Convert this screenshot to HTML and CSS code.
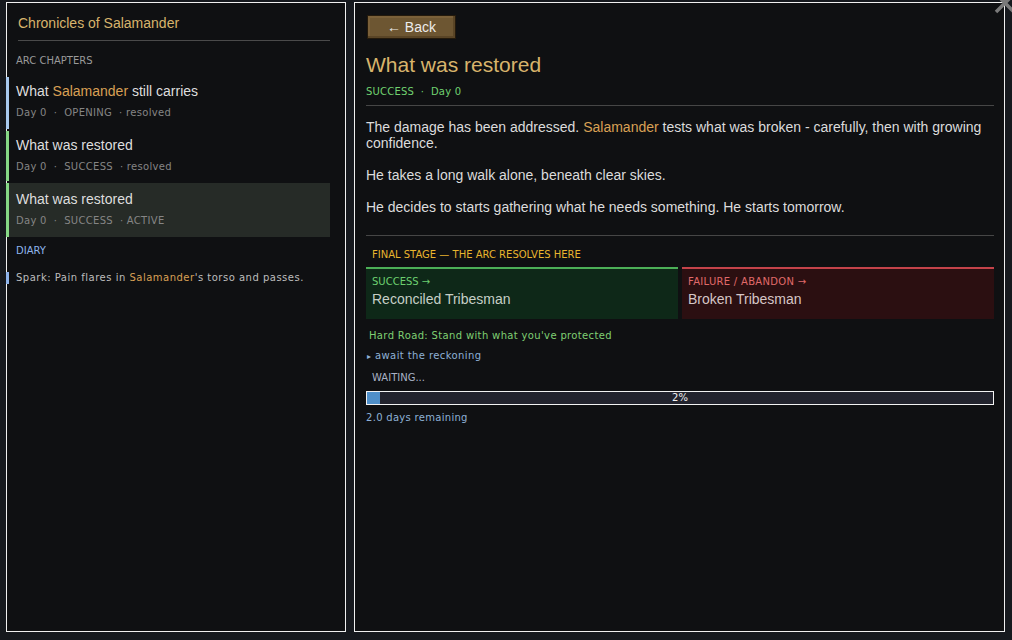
FILE: index.html
```html
<!DOCTYPE html>
<html>
<head>
<meta charset="utf-8">
<link rel="stylesheet" href="styles.css">
</head>
<body>
<div class="app">
  <aside class="side">
    <h1 class="side-title">Chronicles of Salamander</h1>
    <div class="section-label">ARC CHAPTERS</div>
    <div class="chapter ch-open">
      <div class="ch-title">What <span class="name">Salamander</span> still carries</div>
      <div class="ch-meta">Day 0 &nbsp;·&nbsp; OPENING &nbsp;· resolved</div>
    </div>
    <div class="chapter ch-success">
      <div class="ch-title">What was restored</div>
      <div class="ch-meta">Day 0 &nbsp;·&nbsp; SUCCESS &nbsp;· resolved</div>
    </div>
    <div class="chapter ch-success ch-active">
      <div class="ch-title">What was restored</div>
      <div class="ch-meta">Day 0 &nbsp;·&nbsp; SUCCESS &nbsp;· ACTIVE</div>
    </div>
    <div class="section-label diary-label">DIARY</div>
    <div class="diary-entry">Spark: Pain flares in <span class="name">Salamander</span>'s torso and passes.</div>
  </aside>
  <main class="main">
    <button class="back">← Back</button>
    <h2 class="main-title">What was restored</h2>
    <div class="main-meta">SUCCESS &nbsp;·&nbsp; Day 0</div>
    <div class="story">
      <p>The damage has been addressed. <span class="name">Salamander</span> tests what was broken - carefully, then with growing confidence.</p>
      <p>He takes a long walk alone, beneath clear skies.</p>
      <p>He decides to starts gathering what he needs something. He starts tomorrow.</p>
    </div>
    <div class="final">FINAL STAGE — THE ARC RESOLVES HERE</div>
    <div class="outcomes">
      <div class="outcome good">
        <div class="oc-label">SUCCESS →</div>
        <div class="oc-name">Reconciled Tribesman</div>
      </div>
      <div class="outcome bad">
        <div class="oc-label">FAILURE / ABANDON →</div>
        <div class="oc-name">Broken Tribesman</div>
      </div>
    </div>
    <div class="hard-road">Hard Road: Stand with what you've protected</div>
    <div class="await"><span class="tri">▸</span> await the reckoning</div>
    <div class="waiting">WAITING...</div>
    <div class="bar">
      <div class="fill" style="width:2%"></div>
      <div class="pct">2%</div>
    </div>
    <div class="remaining">2.0 days remaining</div>
  </main>
  <svg class="close" width="24" height="24" viewBox="0 0 24 24">
    <path d="M3 3 L21 21 M21 3 L3 21" stroke="#7a7a7a" stroke-width="3.5" fill="none"/>
  </svg>
</div>
</body>
</html>
```
FILE: styles.css
```css
* { box-sizing: border-box; }
html, body { margin: 0; padding: 0; }
body {
  background: #16191e;
  width: 1012px;
  height: 640px;
  overflow: hidden;
  font-family: "Liberation Sans", Arial, sans-serif;
  color: #dcdcdc;
}
.app {
  position: relative;
  display: flex;
  gap: 8px;
  padding: 2px 7px 8px 6px;
  height: 640px;
}
.side {
  width: 340px;
  flex: none;
  background: #0f1012;
  border: 1px solid #f0f0f0;
  padding: 0 15px 0 0;
}
.side-title {
  margin: 0 0 0 11px;
  padding: 11px 0 8px 0;
  font-size: 14px;
  font-weight: normal;
  color: #d8b46c;
  border-bottom: 1px solid #4a4a4a;
  line-height: 18px;
}
.section-label {
  font-family: "DejaVu Sans", sans-serif;
  font-size: 10px;
  color: #9a9a9a;
  margin: 14px 0 0 9px;
  line-height: 12px;
}
.chapter {
  margin-top: 10px;
  border-left: 3px solid #a8caf0;
  padding: 6px 0 0 7px;
  margin-left: -1px;
  height: 52px;
}
.chapter + .chapter { margin-top: 2px; }
.ch-success { border-left-color: #86d886; height: 50px; }
.ch-active { background: #262b27; height: 54px; padding-top: 8px; }
.ch-title {
  font-size: 14px;
  line-height: 16px;
  color: #dedede;
}
.name { color: #d9a055; }
.ch-meta {
  font-family: "DejaVu Sans", sans-serif;
  font-size: 10px;
  line-height: 12px;
  color: #858585;
  margin-top: 8px;
  letter-spacing: 0.3px;
}
.diary-label { color: #8eb4ec; margin-top: 8px; }
.diary-entry {
  font-family: "DejaVu Sans", sans-serif;
  font-size: 10px;
  line-height: 12px;
  color: #bdbdbd;
  margin: 15px 0 0 -1px;
  padding-left: 7px;
  border-left: 3px solid #8eb4ec;
  letter-spacing: 0.5px;
}
.main {
  flex: 1;
  background: #0f1012;
  border: 1px solid #f0f0f0;
  padding: 12px 10px 0 11px;
  display: flex;
  flex-direction: column;
}
.main > .back { align-self: flex-start; }
.back {
  margin: 0 0 0 1px;
  width: 89px;
  height: 24px;
  background: #6d5632;
  border: 1px solid #241a0c;
  box-shadow: inset -2px -2px 0 #5a4526, inset 2px 2px 0 #7a6039;
  color: #ececec;
  font-family: "Liberation Sans", Arial, sans-serif;
  font-size: 14px;
  padding: 0 0 1px 0;
}
.main-title {
  margin: 14px 0 0 0;
  font-size: 21px;
  line-height: 24px;
  font-weight: normal;
  color: #d8b46c;
}
.main-meta {
  font-family: "DejaVu Sans", sans-serif;
  font-size: 10px;
  line-height: 12px;
  color: #70d070;
  margin-top: 9px;
  padding-bottom: 7px;
  border-bottom: 1px solid #464646;
  letter-spacing: 0.2px;
}
.story {
  padding: 13px 0 4px 0;
  border-bottom: 1px solid #464646;
}
.story p {
  margin: 0 0 16px 0;
  font-size: 14px;
  line-height: 16px;
  color: #dcdcdc;
}
.final {
  font-family: "DejaVu Sans", sans-serif;
  font-size: 10px;
  line-height: 12px;
  color: #e9b52e;
  margin: 13px 0 0 6px;
}
.outcomes {
  display: flex;
  gap: 4px;
  margin-top: 6px;
}
.outcome {
  flex: 1;
  height: 52px;
  padding: 7px 6px 0 6px;
}
.good { background: #0e2818; border-top: 2px solid #4caf57; }
.bad { background: #2b0f11; border-top: 2px solid #c4434a; }
.oc-label {
  font-family: "DejaVu Sans", sans-serif;
  font-size: 10px;
  line-height: 12px;
}
.good .oc-label { color: #6ccf70; }
.bad .oc-label { color: #e06a6a; letter-spacing: 0.3px; }
.oc-name {
  font-size: 14px;
  line-height: 16px;
  margin-top: 3px;
}
.good .oc-name { color: #c6cfc6; }
.bad .oc-name { color: #d6c6c6; }
.hard-road {
  font-family: "DejaVu Sans", sans-serif;
  font-size: 10px;
  line-height: 12px;
  color: #7fcf72;
  margin: 11px 0 0 3px;
  letter-spacing: 0.35px;
}
.await {
  font-family: "DejaVu Sans", sans-serif;
  font-size: 10px;
  line-height: 12px;
  color: #8eb0d6;
  margin: 8px 0 0 1px;
  letter-spacing: 0.4px;
}
.tri { font-size: 8px; }
.waiting {
  font-family: "DejaVu Sans", sans-serif;
  font-size: 10px;
  line-height: 12px;
  color: #a9b2c6;
  margin: 9px 0 0 6px;
}
.bar {
  position: relative;
  height: 14px;
  border: 1px solid #f2f2f2;
  background: #22232d;
  margin-top: 7px;
}
.fill {
  height: 100%;
  background: #4f8fc9;
}
.pct {
  position: absolute;
  left: 0; right: 0; top: 0;
  text-align: center;
  font-family: "DejaVu Sans", sans-serif;
  font-size: 10px;
  line-height: 12px;
  color: #f0f0f0;
}
.remaining {
  font-family: "DejaVu Sans", sans-serif;
  font-size: 10px;
  line-height: 12px;
  color: #8eb0d6;
  margin-top: 7px;
  letter-spacing: 0.3px;
}
.close {
  position: absolute;
  left: 993px;
  top: -9px;
}
```
